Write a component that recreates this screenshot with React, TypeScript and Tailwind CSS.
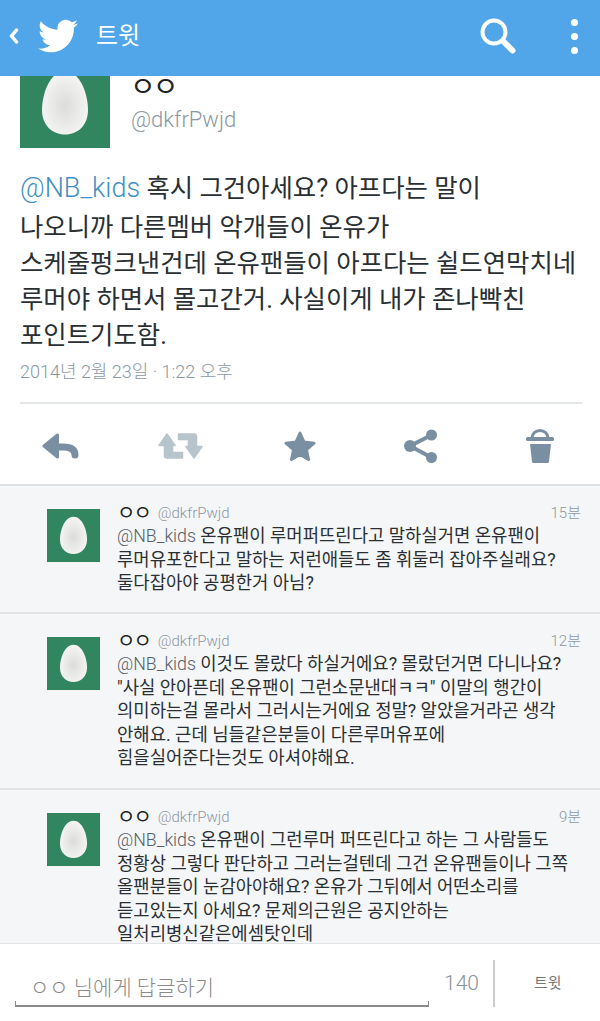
import { FaTwitter } from 'react-icons/fa';

const replies = [
  {
    time: '15분',
    height: 'h-[128px]',
    lines: [
      <><At />온유팬이 루머퍼뜨린다고 말하실거면 온유팬이</>,
      '루머유포한다고 말하는 저런애들도 좀 휘둘러 잡아주실래요?',
      '둘다잡아야 공평한거 아님?',
    ],
  },
  {
    time: '12분',
    height: 'h-[176px]',
    lines: [
      <><At />이것도 몰랐다 하실거에요? 몰랐던거면 다니나요?</>,
      '"사실 안아픈데 온유팬이 그런소문낸대ㅋㅋ" 이말의 행간이',
      '의미하는걸 몰라서 그러시는거에요 정말? 알았을거라곤 생각',
      '안해요. 근데 님들같은분들이 다른루머유포에',
      '힘을실어준다는것도 아셔야해요.',
    ],
  },
  {
    time: '9분',
    height: 'h-[176px]',
    lines: [
      <><At />온유팬이 그런루머 퍼뜨린다고 하는 그 사람들도</>,
      '정황상 그렇다 판단하고 그러는걸텐데 그건 온유팬들이나 그쪽',
      '올팬분들이 눈감아야해요? 온유가 그뒤에서 어떤소리를',
      '듣고있는지 아세요? 문제의근원은 공지안하는',
      '일처리병신같은에셈탓인데',
    ],
  },
];

function At() {
  return <span className="font-light text-[#55606a]">@NB_kids </span>;
}

function Egg({ className }: { className: string }) {
  return (
    <svg viewBox="0 0 90 90" className={className}>
      <defs>
        <radialGradient id="egg" cx="50%" cy="55%" r="60%">
          <stop offset="0%" stopColor="#dcdcda" />
          <stop offset="100%" stopColor="#f8f8f6" />
        </radialGradient>
      </defs>
      <rect width="90" height="90" fill="#31865f" />
      <path d="M45 13C30 13 22 36 22 52c0 15 10 24.500 23 24.500S68 67 68 52C68 36 60 13 45 13Z" fill="url(#egg)" />
    </svg>
  );
}

function ActionIcons() {
  return (
    <div className="grid h-[80px] grid-cols-5 items-center justify-items-center pt-[3px]">
      <svg viewBox="0 0 37 26" className="h-[26px] w-[37px]">
        <path d="M2 13 15.500 2V24Z" fill="#7a8fa1" stroke="#7a8fa1" strokeWidth="3" strokeLinejoin="round" />
        <path d="M15 14h6c7 0 12 2 12 8" fill="none" stroke="#7a8fa1" strokeWidth="7" strokeLinecap="round" />
      </svg>
      <svg viewBox="0 0 45 26" className="h-[26px] w-[45px]" fill="#b8c4cc" stroke="#b8c4cc" strokeWidth="1.500" strokeLinejoin="round">
        <path d="M9 1 17 12.500H14.500V19.500H24.500V25H9Q6.500 25 6.500 22.500V12.500H1Z" />
        <path d="M36 25 28 13.500H30.500V6.500H20.500V1H36Q38.500 1 38.500 3.500V13.500H44Z" />
      </svg>
      <svg viewBox="0 0 32 30" className="h-[30px] w-[32px]">
        <path
          d="m16 2 4 9 10 1.200-7.500 6.500 2 9.800L16 23.500 7.500 28.500l2-9.800L2 12.200 12 11Z"
          fill="#7a8fa1"
          stroke="#7a8fa1"
          strokeWidth="3"
          strokeLinejoin="round"
        />
      </svg>
      <svg viewBox="0 0 33 34" className="h-[34px] w-[33px]" fill="#7a8fa1">
        <circle cx="27.500" cy="6" r="5.500" />
        <circle cx="6" cy="17" r="6" />
        <circle cx="27.500" cy="28.500" r="5.500" />
        <path d="M6 17 27.500 6M6 17l21.500 11.500" stroke="#7a8fa1" strokeWidth="4" />
      </svg>
      <svg viewBox="0 0 28 34" className="h-[34px] w-[28px]" fill="#7a8fa1">
        <path d="M6 9a8 7.500 0 0 1 16 0" fill="none" stroke="#7a8fa1" strokeWidth="3" />
        <rect x="0" y="8" width="28" height="4" rx="1.500" />
        <path d="M4 15h21l-2 17.500q0 1.500-1.500 1.500h-14Q6 34 6 32.500Z" />
      </svg>
    </div>
  );
}

export default function App() {
  return (
    <div className="flex h-[1021px] w-[600px] flex-col overflow-hidden bg-white font-['Roboto','Noto_Sans_CJK_KR',sans-serif]">
      {/* Top bar */}
      <header className="relative z-10 flex h-[76px] shrink-0 items-center bg-[#50a6e8] pb-[4px] text-white">
        <svg viewBox="0 0 10 16" className="ml-[9px] h-[16px] w-[10px]" fill="none" stroke="white" strokeWidth="3.500" strokeLinecap="round" strokeLinejoin="round">
          <path d="M7.500 2 2.500 8l5 6" />
        </svg>
        <FaTwitter className="ml-[19px] h-[40px] w-[40px]" />
        <span className="ml-[18px] text-[24px] leading-none">트윗</span>
        <svg viewBox="0 0 36 36" className="ml-auto h-[36px] w-[36px]" fill="none" stroke="white">
          <circle cx="14" cy="14" r="11.500" strokeWidth="4" />
          <path d="m24 24 8.500 8.500" strokeWidth="6" strokeLinecap="round" />
        </svg>
        <div className="ml-[55px] mr-[22px] flex flex-col gap-[7px]">
          <div className="h-[7px] w-[7px] rounded-full bg-white" />
          <div className="h-[7px] w-[7px] rounded-full bg-white" />
          <div className="h-[7px] w-[7px] rounded-full bg-white" />
        </div>
      </header>

      <main className="min-h-0 flex-1 overflow-hidden">
        {/* Main tweet, scrolled so the avatar runs under the bar */}
        <section className="-mt-[18px] border-b-2 border-[#dde1e5] bg-white">
          <div className="flex pl-[20px]">
            <Egg className="h-[90px] w-[90px] shrink-0" />
            <div className="ml-[20px] pt-[18px]">
              <div className="text-[28px] leading-[24px] tracking-[-3px] text-[#222]">ㅇㅇ</div>
              <div className="ml-[1px] mt-[6px] text-[22px] leading-[28px] font-light text-[#8b98a3]">@dkfrPwjd</div>
            </div>
          </div>
          <div className="mt-[20px] px-[20px] text-[25.400px] leading-[36px] whitespace-nowrap text-[#292f33]">
            <div className="leading-[41px]">
              <span className="text-[27px] font-light text-[#3f8fc4]">@NB_kids</span> 혹시 그건아세요? 아프다는 말이
            </div>
            <div>나오니까 다른멤버 악개들이 온유가</div>
            <div>스케줄펑크낸건데 온유팬들이 아프다는 쉴드연막치네</div>
            <div>루머야 하면서 몰고간거. 사실이게 내가 존나빡친</div>
            <div>포인트기도함.</div>
          </div>
          <div className="mt-[5px] px-[20px] text-[18px] leading-[28px] font-light text-[#8b98a3]">
            2014년 2월 23일 · 1:22 오후
          </div>
          <div className="ml-[20px] mr-[18px] mt-[16px] border-t-2 border-[#e4e7ea]" />
          <ActionIcons />
        </section>

        {/* Replies */}
        <section className="bg-[#f5f6f7]">
          {replies.map((r) => (
            <div key={r.time} className={`flex border-b-2 border-[#e2e5e8] pl-[47px] pr-[19px] pt-[15px] ${r.height}`}>
              <Egg className="mt-[8px] h-[53px] w-[53px] shrink-0" />
              <div className="ml-[17px] min-w-0 flex-1">
                <div className="flex h-[24px] items-center">
                  <span className="text-[20px] leading-[24px] tracking-[-2px] text-[#222]">ㅇㅇ</span>
                  <span className="ml-[8px] text-[15px] font-light text-[#8b98a3]">@dkfrPwjd</span>
                  <span className="ml-auto text-[15px] font-light text-[#8b98a3]">{r.time}</span>
                </div>
                <div className="text-[17.750px] leading-[23.500px] whitespace-nowrap text-[#292f33]">
                  {r.lines.map((line, i) => (
                    <div key={i}>{line}</div>
                  ))}
                </div>
              </div>
            </div>
          ))}
        </section>
      </main>

      {/* Reply box */}
      <footer className="z-10 flex h-[78px] shrink-0 border-t border-[#e2e5e8] bg-white">
        <div className="ml-[15px] mt-[26px] w-[414px]">
          <div className="pl-[15px] text-[21px] leading-[36px] font-light text-[#8a8a8a]">ㅇㅇ 님에게 답글하기</div>
          <div className="-mt-[5px] h-[6px] border-x border-b-2 border-[#8b8b8b]" />
        </div>
        <div className="w-[64px] pl-[15px] pt-[21px] text-[21px] leading-[36px] font-light text-[#8a9299]">140</div>
        <div className="mt-[16px] h-[47px] w-[2px] bg-[#ccc]" />
        <span className="ml-[39px] mt-[26px] text-[15px] leading-[26px] text-[#777]">트윗</span>
      </footer>
    </div>
  );
}
